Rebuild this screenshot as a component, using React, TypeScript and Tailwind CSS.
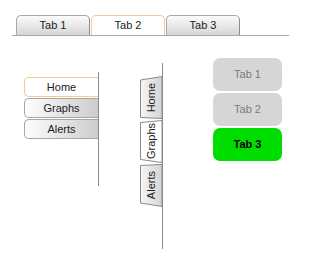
import { useState } from 'react';

const font = { fontFamily: '"Liberation Sans", Arial, sans-serif' };

function TopTabs() {
  const [active, setActive] = useState(1);
  const tabs = ['Tab 1', 'Tab 2', 'Tab 3'];

  return (
    <div className="ml-[12px] flex w-[277px] gap-[1px] border-b border-[#a8a8a8] pl-[4px] pt-[15px]">
      {tabs.map((label, i) => (
        <button
          type="button"
          key={label}
          onClick={() => setActive(i)}
          className={
            i === active
              ? 'h-[20px] w-[74px] rounded-t-[5px] border border-b-0 border-[#f6cb93] bg-white text-[11px] text-[#222]'
              : 'h-[20px] w-[74px] rounded-t-[5px] border border-b-0 border-[#a9a9a9] border-r-[#8e8e8e] bg-gradient-to-b from-[#fbfbfb] to-[#d6d6d6] text-[11px] text-[#222]'
          }
        >
          {label}
        </button>
      ))}
    </div>
  );
}

function SideTabs() {
  const [active, setActive] = useState(0);
  const tabs = ['Home', 'Graphs', 'Alerts'];

  return (
    <div className="mt-[14px] flex h-[114px] w-[75px] flex-col gap-[1px] border-r border-[#8c8c8c] pt-[5px]">
      {tabs.map((label, i) => (
        <button
          type="button"
          key={label}
          onClick={() => setActive(i)}
          className={
            i === active
              ? 'h-[20px] w-full rounded-l-[5px] border border-r-0 border-[#f6c98d] bg-white text-[11px] text-[#222]'
              : 'h-[20px] w-full rounded-l-[5px] border border-r-0 border-[#a6a6a6] bg-gradient-to-r from-[#fdfdfd] to-[#cdcdcd] text-[11px] text-[#222]'
          }
        >
          {label}
        </button>
      ))}
    </div>
  );
}

function SlantTabs() {
  const [active, setActive] = useState(1);
  const tabs = [
    { label: 'Home', top: 3.5, bottom: 1 },
    { label: 'Graphs', top: 2, bottom: 3 },
    { label: 'Alerts', top: 1, bottom: 3.5 },
  ];

  return (
    <div className="mt-[5px] flex h-[186px] w-[23px] flex-col gap-[1px] border-r border-[#8c8c8c] pt-[13px]">
      {tabs.map((t, i) => (
        <button
          type="button"
          key={t.label}
          onClick={() => setActive(i)}
          className="relative flex h-[43px] w-[22px] items-center justify-center"
        >
          <svg className="absolute inset-0" width="22" height="43" viewBox="0 0 22 43">
            <defs>
              <linearGradient id={`g${i}`} x1="0" x2="1" y1="0" y2="0">
                <stop offset="0" stopColor="#f6f6f6" />
                <stop offset="1" stopColor="#d4d4d4" />
              </linearGradient>
            </defs>
            <polygon
              points={`0.5,${t.top + 0.5} 22,0.5 22,42.5 0.5,${42.5 - t.bottom}`}
              fill={i === active ? '#ffffff' : `url(#g${i})`}
              stroke="#8a8a8a"
              strokeWidth="1"
            />
          </svg>
          <span className="relative rotate-180 text-[11px] text-[#222] [writing-mode:vertical-rl]">
            {t.label}
          </span>
        </button>
      ))}
    </div>
  );
}

function PillTabs() {
  const [active, setActive] = useState(2);
  const tabs = ['Tab 1', 'Tab 2', 'Tab 3'];

  return (
    <div className="flex w-[69px] flex-col gap-[2px]">
      {tabs.map((label, i) => (
        <button
          type="button"
          key={label}
          onClick={() => setActive(i)}
          className={
            i === active
              ? 'h-[33px] rounded-[7px] bg-[#00dd00] text-[11px] font-bold text-black'
              : 'h-[33px] rounded-[7px] bg-[#d6d6d6] text-[11px] text-[#7a7a7a]'
          }
        >
          {label}
        </button>
      ))}
    </div>
  );
}

export default function App() {
  return (
    <div className="h-[277px] w-[312px] bg-white" style={font}>
      <TopTabs />
      <div className="mt-[22px] flex items-start">
        <div className="ml-[24px]">
          <SideTabs />
        </div>
        <div className="ml-[41px]">
          <SlantTabs />
        </div>
        <div className="ml-[50px]">
          <PillTabs />
        </div>
      </div>
    </div>
  );
}
